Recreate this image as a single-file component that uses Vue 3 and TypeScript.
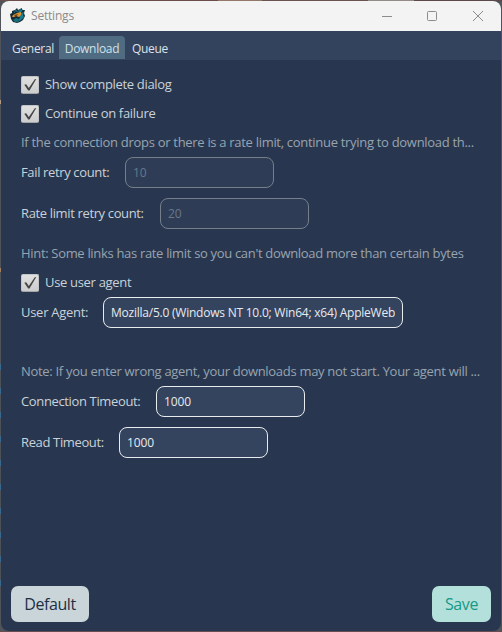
<script setup lang="ts">
import { ref } from 'vue'

const tabs = ['General', 'Download', 'Queue']
const active = ref('Download')
const complete = ref(true)
const resume = ref(true)
const useAgent = ref(true)
const failCount = ref('10')
const rateCount = ref('20')
const agent = ref('Mozilla/5.0 (Windows NT 10.0; Win64; x64) AppleWeb')
const connectTimeout = ref('1000')
const readTimeout = ref('1000')
</script>

<template>
  <div class="desktop">
    <div class="window">
      <header class="titlebar">
        <svg class="logo" width="16" height="16" viewBox="0 0 16 16">
          <path d="M0 6 2 5 2 3 5 2 7 0 8 2 12 0 12 2 15 2 14 5 15 8 13 12 10 14 7 15 3 14 1 11Z" fill="#172c37" />
          <path d="M9 3 13 1 11 5 14 4 13 7 14 9 11 12 8 14 10 9 8 8Z" fill="#147f92" />
          <path d="M3 12 6 10 9 11 8 14 5 14Z" fill="#176e7d" />
          <path d="M2 9 3 7 7 5 11 4 11 7 9 9 6 8 4 9Z" fill="#df922e" />
          <path d="M4 7 8 6 7 8 5 8Z" fill="#734b20" />
          <path d="M4 5 6 2 7 4 11 1 9 4" fill="none" stroke="#1b7181" />
        </svg>
        <span class="title">Settings</span>
        <svg class="controls" width="104" height="14" viewBox="0 0 104 14" fill="none" stroke="#8c8c8c">
          <path d="M1 7.5h10" />
          <rect x="46.5" y="2.5" width="9" height="9" rx="1" />
          <path d="m92 2 10 10M102 2 92 12" />
        </svg>
      </header>
      <nav class="tabs">
        <button v-for="tab in tabs" :key="tab" class="tab" :class="[tab.toLowerCase(), { active: active === tab }]" @click="active = tab">{{ tab }}</button>
      </nav>
      <main class="content">
        <label class="check">
          <input v-model="complete" type="checkbox" />
          <span class="box"><svg v-if="complete" width="18" height="18" viewBox="0 0 18 18"><path d="M3.3 8.7 5.2 8.3 7.8 12 13.8 3.3 15.3 3 8.5 14.6 7.2 14.6Z" /></svg></span>
          <span>Show complete dialog</span>
        </label>
        <label class="check second">
          <input v-model="resume" type="checkbox" />
          <span class="box"><svg v-if="resume" width="18" height="18" viewBox="0 0 18 18"><path d="M3.3 8.7 5.2 8.3 7.8 12 13.8 3.3 15.3 3 8.5 14.6 7.2 14.6Z" /></svg></span>
          <span>Continue on failure</span>
        </label>
        <p class="note">If the connection drops or there is a rate limit, continue trying to download th...</p>
        <div class="row"><label class="l-fail">Fail retry count:</label><input v-model="failCount" disabled /></div>
        <div class="row next"><label class="l-rate">Rate limit retry count:</label><input v-model="rateCount" disabled /></div>
        <p class="note hint">Hint: Some links has rate limit so you can't download more than certain bytes</p>
        <label class="check third">
          <input v-model="useAgent" type="checkbox" />
          <span class="box"><svg v-if="useAgent" width="18" height="18" viewBox="0 0 18 18"><path d="M3.3 8.7 5.2 8.3 7.8 12 13.8 3.3 15.3 3 8.5 14.6 7.2 14.6Z" /></svg></span>
          <span>Use user agent</span>
        </label>
        <div class="row agent"><label class="l-agent">User Agent:</label><input v-model="agent" class="wide" /></div>
        <p class="note wrong">Note: If you enter wrong agent, your downloads may not start. Your agent will ...</p>
        <div class="row"><label class="l-connect">Connection Timeout:</label><input v-model="connectTimeout" /></div>
        <div class="row next"><label class="l-read">Read Timeout:</label><input v-model="readTimeout" /></div>
      </main>
      <footer class="actions">
        <button class="default">Default</button>
        <button class="save">Save</button>
      </footer>
    </div>
  </div>
</template>

<style>
body { margin: 0; overflow: hidden; }
</style>

<style scoped>
* { box-sizing: border-box; }
.desktop {
  width: 502px; height: 632px; padding: 1px;
  background:
    linear-gradient(90deg, #6b4e4a 0 218px, #937768 218px 262px, #68534f 262px 368px, #938b8a 368px 414px, #5c484b 414px) 0 0 / 502px 1px no-repeat,
    linear-gradient(#664d52, #664d52) 0 631px / 502px 1px no-repeat,
    repeating-linear-gradient(#386991 0 6px, #4c5258 6px 24px) 0 364px / 1px 240px no-repeat,
    linear-gradient(#a5805e, #a5805e) 0 268px / 1px 4px no-repeat,
    linear-gradient(#b39c82, #b39c82) 0 100px / 1px 4px no-repeat,
    #50545a;
  font: 13px/18px "Open Sans", "Noto Sans", sans-serif;
  letter-spacing: -0.32px;
}
.window {
  display: flex; flex-direction: column;
  width: 500px; height: 630px; overflow: hidden;
  border-radius: 8px; background: #28374f; color: #cad2d9;
}
.titlebar { display: flex; align-items: center; height: 30px; flex: none; padding: 0 16px 0 9px; background: #f3f3f3; }
.title { margin-left: 5px; color: #8b8b8b; font-size: 12px; letter-spacing: -0.2px; }
.controls { margin-left: auto; }
.tabs { display: flex; align-items: flex-end; height: 29px; flex: none; padding: 0 0 1px 2px; background: #34435d; }
button { border: 0; padding: 0; font-family: inherit; cursor: pointer; }
.tab { height: 23px; background: transparent; color: #dce2e8; font-size: 12px; line-height: 23px; letter-spacing: -0.3px; white-space: nowrap; padding-top: 1px; }
.tab.general { width: 56px; padding-left: 4px; }
.tab.download { width: 66px; }
.tab.queue { width: 50px; }
.tab.active { border-radius: 4px 4px 0 0; background: #4f6c82; color: #d1e0e8; }
.content { flex: 1; padding: 16px 20px 0; white-space: nowrap; }
.check { display: flex; align-items: center; height: 18px; }
.check > input { display: none; }
.check > span:last-child { padding-bottom: 2px; }
.check.second { margin-top: 11px; }
.check.third { margin-top: 12px; }
.box { display: block; width: 18px; height: 18px; margin-right: 6px; border: 1px solid #c3c4c5; border-bottom-color: #a5a5a5; border-radius: 2px; background: linear-gradient(#e0e0e0, #cccdce); }
.box svg { display: block; margin: -1px; fill: #454545; }
.note { height: 18px; margin: 10px 0 6px; color: #98a4b0; letter-spacing: -0.3px; }
.row { display: flex; align-items: center; height: 31px; }
.row.next { margin-top: 10px; }
.row label { padding-bottom: 2px; letter-spacing: -0.36px; }
.row input {
  width: 149px; height: 31px; padding: 0 7px; outline: 0;
  border: 1px solid #e9ecef; border-radius: 8px;
  background: #35445e; color: #e6eaee;
  font: 12px/18px "Open Sans", "Noto Sans", sans-serif;
  letter-spacing: -0.15px;
}
.row input:disabled { border-color: #757f8c; background: #2e3d55; color: #69778a; }
.row .wide { width: 300px; letter-spacing: -0.23px; }
.l-fail { width: 104px; }
.l-rate { width: 139px; }
.row .l-agent { width: 82px; letter-spacing: -0.28px; }
.l-connect { width: 135px; }
.l-read { width: 98px; }
.note.hint { margin: 15px 0 0; letter-spacing: -0.32px; }
.row.agent { margin-top: 5px; }
.note.wrong { margin: 34px 0 6px; letter-spacing: -0.3px; }
.actions { display: flex; align-items: center; justify-content: space-between; height: 36px; margin: 0 10px 9px; }
.actions button { height: 36px; border-radius: 7px; font-size: 16px; letter-spacing: -0.4px; }
.default { width: 78px; background: #c9d5d9; color: #1c3044; }
.save { width: 59px; background: #b3e0da; color: #149a87; }
</style>
